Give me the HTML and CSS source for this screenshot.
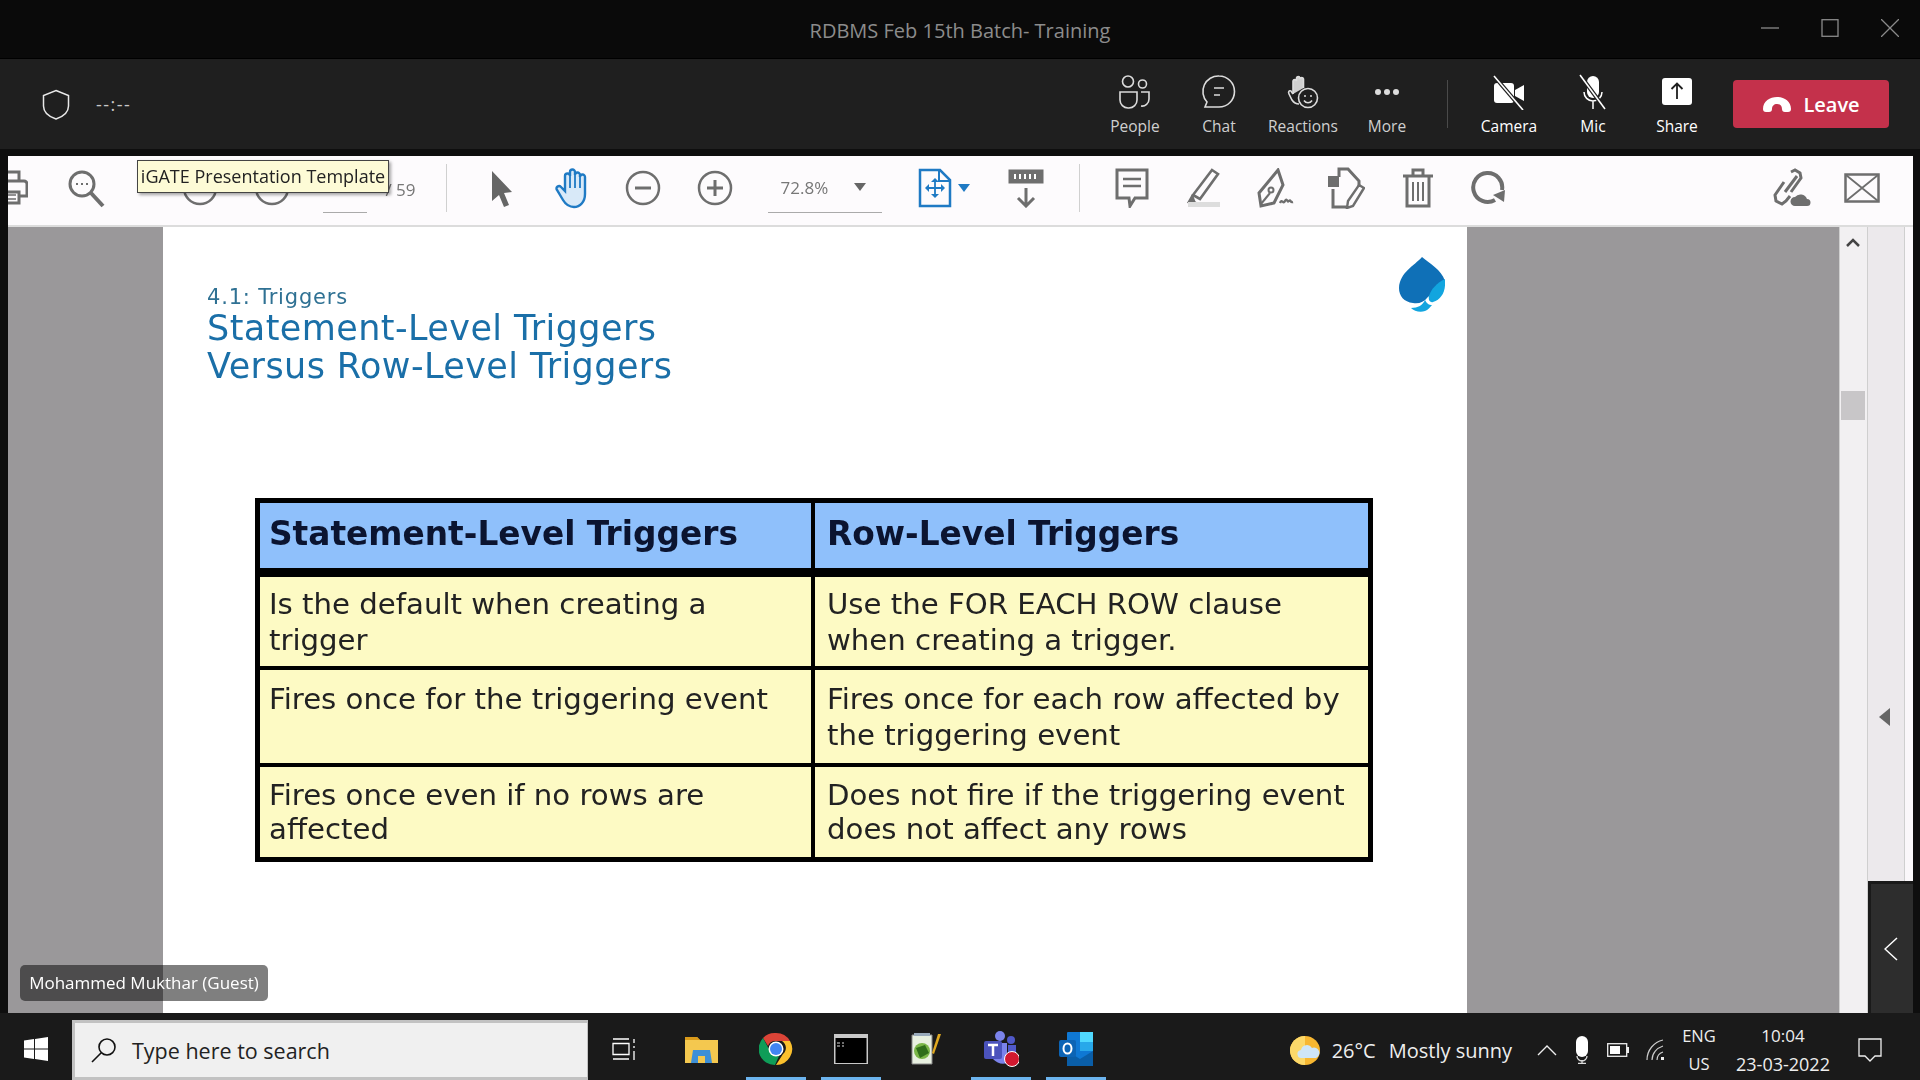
FILE: index.html
```html
<!DOCTYPE html>
<html>
<head>
	<meta charset="utf-8">
	<title>RDBMS Feb 15th Batch- Training</title>
	<link rel="stylesheet" href="styles.css">
</head>
<body>
	<div class="titlebar">
		<div class="title">RDBMS Feb 15th Batch- Training</div>
		<div class="winbtns">
			<svg width="18" height="18" viewBox="0 0 18 18"><path d="M0 9h18" stroke="#8a8a8a" stroke-width="1.3"/></svg>
			<svg width="18" height="18" viewBox="0 0 18 18"><rect x="1" y="0.7" width="16" height="16.6" fill="none" stroke="#8a8a8a" stroke-width="1.3"/></svg>
			<svg width="18" height="18" viewBox="0 0 18 18"><path d="M0 0l18 18M18 0L0 18" stroke="#8a8a8a" stroke-width="1.3"/></svg>
		</div>
	</div>

	<div class="meetbar">
		<svg class="shield" width="28" height="31" viewBox="0 0 28 31"><path d="M14 1.5l12.5 5V17c0 6-5 10.500-12.500 13C6.500 27.500 1.500 23 1.500 17V6.500z" fill="none" stroke="#e8e8e8" stroke-width="1.5"/></svg>
		<span class="timer">--:--</span>
		<div class="meetbtns">
			<div class="mbtn">
				<svg width="36" height="36" viewBox="0 0 36 36" fill="none" stroke="#dcdcdc" stroke-width="1.6"><circle cx="11" cy="7.500" r="5.500"/><circle cx="25.500" cy="10" r="4"/><path d="M3 18h17v8a8 8 0 0 1-8 8h-1a8 8 0 0 1-8-8zM24 18h8v7a7 7 0 0 1-8 7"/></svg>
				<span>People</span>
			</div>
			<div class="mbtn">
				<svg width="36" height="36" viewBox="0 0 36 36" fill="none" stroke="#dcdcdc" stroke-width="1.6"><path d="M18 2a15.500 15.500 0 0 1 0 31h-14l2-5A15.500 15.500 0 0 1 18 2z"/><path d="M13 14h10M13 21h6"/></svg>
				<span>Chat</span>
			</div>
			<div class="mbtn">
				<svg width="36" height="36" viewBox="0 0 36 36" fill="none" stroke="#dcdcdc" stroke-width="1.6"><path d="M8 20V7a1.800 1.800 0 0 1 3.500 0V4a1.800 1.800 0 0 1 3.500 0v1a1.800 1.800 0 0 1 3.500 0v9" fill="#cfcfcf"/><path d="M8 20l-2-3c-2-1-3 1-2 3l3 6c2 3 4 4 7 4"/><circle cx="23" cy="24" r="9.500" fill="#1f1f1f"/><circle cx="20" cy="22" r="1" fill="#dcdcdc" stroke="none"/><circle cx="26" cy="22" r="1" fill="#dcdcdc" stroke="none"/><path d="M19 26.500c2 3 6 3 8 0"/></svg>
				<span>Reactions</span>
			</div>
			<div class="mbtn">
				<svg width="36" height="36" viewBox="0 0 36 36" fill="#dcdcdc"><circle cx="9" cy="18" r="3"/><circle cx="18" cy="18" r="3"/><circle cx="27" cy="18" r="3"/></svg>
				<span>More</span>
			</div>
			<div class="mdivider"></div>
			<div class="mbtn on">
				<svg width="36" height="36" viewBox="0 0 36 36"><rect x="3" y="9" width="20" height="20" rx="3" fill="#fff"/><path d="M24 16l9-5v16l-9-5z" fill="#fff"/><path d="M3 2l29 34" stroke="#1f1f1f" stroke-width="4"/><path d="M3 2l29 34" stroke="#fff" stroke-width="1.600"/></svg>
				<span>Camera</span>
			</div>
			<div class="mbtn on">
				<svg width="36" height="36" viewBox="0 0 36 36" fill="none"><rect x="12" y="2" width="12" height="22" rx="6" fill="#fff"/><path d="M9 18a9 9 0 0 0 18 0M18 27v8" stroke="#fff" stroke-width="1.500"/><path d="M5 1l25 34" stroke="#1f1f1f" stroke-width="4"/><path d="M5 1l25 34" stroke="#fff" stroke-width="1.600"/></svg>
				<span>Mic</span>
			</div>
			<div class="mbtn on">
				<svg width="36" height="36" viewBox="0 0 36 36"><rect x="3" y="4" width="30" height="27" rx="3" fill="#fff"/><path d="M18 25V10M12.500 15L18 9.500l5.500 5.500" fill="none" stroke="#1f1f1f" stroke-width="1.800"/></svg>
				<span>Share</span>
			</div>
			<div class="leave">
				<svg width="30" height="16" viewBox="0 0 30 16"><path d="M1 13C1 5 8 1 15 1s14 4 14 12c0 2-1 3-3 3h-3c-2 0-3-1-3-3 0-3-2-5-5-5s-5 2-5 5c0 2-1 3-3 3H4c-2 0-3-1-3-3z" fill="#fff"/></svg>
				<span>Leave</span>
			</div>
		</div>
	</div>

	<div class="stage">
		<div class="toolbar">
			<div class="tool printer">
				<svg width="20" height="36" viewBox="0 0 20 36" fill="none" stroke="#6e6e6e" stroke-width="3"><path d="M-4 11V2h15v9"/><path d="M-4 11h20a3 3 0 0 1 3 3v12H11"/><path d="M-4 22h15v11H-4"/><path d="M0 25h8M0 29h8" stroke-width="1.500"/></svg>
			</div>
			<div class="tool mag">
				<svg width="40" height="40" viewBox="0 0 40 40" fill="none" stroke="#6e6e6e" stroke-width="3"><circle cx="16" cy="16" r="12"/><path d="M25 25l12 13" stroke-width="4"/><path d="M10 16h2M15 16h2M20 16h2" stroke-width="2"/></svg>
			</div>
			<div class="tool"><svg class="ico" viewBox="0 0 36 36" fill="none" stroke="#6e6e6e" stroke-width="2.500"><circle cx="18" cy="18" r="16"/></svg></div>
			<div class="tool"><svg class="ico" viewBox="0 0 36 36" fill="none" stroke="#6e6e6e" stroke-width="2.500"><circle cx="18" cy="18" r="16"/></svg></div>
			<div class="pagebox"><span class="pageno">/ 59</span></div>
			<div class="tdivider"></div>
			<div class="tool">
				<svg width="28" height="40" viewBox="0 0 28 40"><path d="M4 3l20 21-8 1 5 12-5 2-5-12-7 6z" fill="#666"/></svg>
			</div>
			<div class="tool hand">
				<svg width="40" height="42" viewBox="0 0 40 42" fill="#d8e9f8" stroke="#1f7ac4" stroke-width="2.400"><path d="M11 24V9a2.500 2.500 0 0 1 5 0V5a2.500 2.500 0 0 1 5 0v3a2.500 2.500 0 0 1 5 0v2a2.500 2.500 0 0 1 5 0v17c0 8-5 13-11 13-5 0-8-2-11-7l-6-10c-2-3 2-5 4-3z"/><path d="M16 8v13M21 7v14M26 9v12" fill="none" stroke-width="1.800"/></svg>
			</div>
			<div class="tool"><svg class="ico" viewBox="0 0 36 36" fill="none" stroke="#6e6e6e" stroke-width="2.500"><circle cx="18" cy="18" r="16"/><path d="M10 18h16" stroke-width="3"/></svg></div>
			<div class="tool"><svg class="ico" viewBox="0 0 36 36" fill="none" stroke="#6e6e6e" stroke-width="2.500"><circle cx="18" cy="18" r="16"/><path d="M10 18h16M18 10v16" stroke-width="3"/></svg></div>
			<div class="zoombox"><span>72.8%</span><i class="caret"></i></div>
			<div class="tool fit">
				<svg width="34" height="40" viewBox="0 0 34 40" fill="none" stroke="#1f7ac4" stroke-width="2.500"><path d="M2 2h20l10 10v26H2z"/><path d="M21 2v11h11" stroke-width="2"/><path d="M17 11v18M8 20h18" stroke-width="1.800"/><path d="M13 14l4-4 4 4M13 26l4 4 4-4M11 16l-4 4 4 4M23 16l4 4-4 4" fill="#1f7ac4" stroke="none"/></svg>
				<i class="caret blue"></i>
			</div>
			<div class="tool">
				<svg width="36" height="40" viewBox="0 0 36 40" fill="none" stroke="#6e6e6e"><rect x="1" y="2" width="34" height="13" fill="#6e6e6e"/><path d="M7 6v5M12 6v5M17 6v5M22 6v5M27 6v5" stroke="#fff" stroke-width="2"/><path d="M18 20v18M10 30l8 8 8-8" stroke-width="3"/></svg>
			</div>
			<div class="tdivider second"></div>
			<div class="tool">
				<svg width="34" height="40" viewBox="0 0 34 40" fill="none" stroke="#6e6e6e" stroke-width="3"><path d="M2 2h30v28H20l-5 8-1-8H2z"/><path d="M8 11h18M8 18h18" stroke-width="2.400"/></svg>
			</div>
			<div class="tool">
				<svg width="38" height="40" viewBox="0 0 38 40" fill="none" stroke="#6e6e6e" stroke-width="2.600"><path d="M28 2l6 4-18 25-7-4z"/><path d="M9 27l-4 7 7 1" fill="#6e6e6e"/><rect x="4" y="34" width="32" height="5" fill="#ddd" stroke="none"/></svg>
			</div>
			<div class="tool">
				<svg width="38" height="40" viewBox="0 0 38 40" fill="none" stroke="#6e6e6e" stroke-width="3"><path d="M22 2l5 15-9 18-13 3-2-13z"/><path d="M5 36l9-11" stroke-width="2"/><circle cx="15" cy="22" r="2.500" stroke-width="2"/><path d="M24 35c2-5 3 2 5-2s2 2 4 0 1 2 4 1" stroke-width="2.400"/></svg>
			</div>
			<div class="tool">
				<svg width="38" height="42" viewBox="0 0 38 42" fill="none" stroke="#6e6e6e" stroke-width="3"><path d="M12 10V2h9l11 12v6M6 22v18h14"/><rect x="1" y="9" width="11" height="11" fill="#6e6e6e" stroke="none"/><path d="M32 18l5 3-11 18-6 2 1-7z" stroke-width="2.400"/></svg>
			</div>
			<div class="tool">
				<svg width="32" height="40" viewBox="0 0 32 40" fill="none" stroke="#6e6e6e" stroke-width="3"><path d="M1 8h30M11 8V2h10v6M5 8v30h22V8"/><path d="M11 14v19M16 14v19M21 14v19" stroke-width="2"/></svg>
			</div>
			<div class="tool">
				<svg width="36" height="36" viewBox="0 0 36 36" fill="none" stroke="#6e6e6e" stroke-width="4"><path d="M24 30A14.500 14.500 0 1 1 31 20"/><path d="M22 25l11 7 1-12z" fill="#6e6e6e" stroke="none"/></svg>
			</div>
			<div class="toolright">
				<div class="tool">
					<svg width="40" height="40" viewBox="0 0 40 40" fill="none" stroke="#6e6e6e" stroke-width="3"><path d="M20 4l4-2 5 3 1 5-10 14M13 14L4 27l1 6 6 3 4-3 4-5"/><path d="M14 24l12-16"/><path d="M24 38a4.500 4.500 0 0 1 0-9 7 7 0 0 1 12 2 3.500 3.500 0 0 1 0 7z" fill="#6e6e6e" stroke="none"/></svg>
				</div>
				<div class="tool">
					<svg width="36" height="30" viewBox="0 0 36 30" fill="none" stroke="#6e6e6e" stroke-width="2.500"><rect x="1.500" y="1.500" width="33" height="27"/><path d="M2 2l32 26M34 2L2 28" stroke-width="1.800"/></svg>
				</div>
			</div>
		</div>

		<div class="viewer">
			<div class="canvas">
				<div class="slide">
					<div class="slidehead">
						<div class="heads">
							<div class="kicker">4.1: Triggers</div>
							<h1>Statement-Level Triggers<br>Versus Row-Level Triggers</h1>
						</div>
						<svg class="logo" width="46" height="56" viewBox="0 0 46 56"><path d="M23 0C15 9 1 15 0 31c0 8 5 14 14 15 6 1 11-1 14-5 2-3 8-4 18-17C42 12 31 7 23 0z" fill="#0f70b7"/><path d="M46 22c1 12-3 20-12 23-3 1-5-2-4-6 2-7 8-13 16-17z" fill="#12a5df"/><path d="M26 43c-2 5-7 8-14 8 3 3 9 5 14 3 3-1 5-4 7-6-3 0-5-1-7-5z" fill="#12a5df"/></svg>
					</div>
					<div class="ttable">
						<div class="row head">
							<div class="cell">Statement-Level Triggers</div>
							<div class="cell">Row-Level Triggers</div>
						</div>
						<div class="row r1">
							<div class="cell">Is the default when creating a<br>trigger</div>
							<div class="cell">Use the FOR EACH ROW clause<br>when creating a trigger.</div>
						</div>
						<div class="row r2">
							<div class="cell">Fires once for the triggering event</div>
							<div class="cell">Fires once for each row affected by<br>the triggering event</div>
						</div>
						<div class="row r3">
							<div class="cell">Fires once even if no rows are<br>affected</div>
							<div class="cell">Does not fire if the triggering event<br>does not affect any rows</div>
						</div>
					</div>
				</div>
			</div>
			<div class="vscroll">
				<svg class="upchev" width="14" height="9" viewBox="0 0 14 9"><path d="M1 8l6-6 6 6" fill="none" stroke="#444" stroke-width="2.500"/></svg>
				<div class="thumb"></div>
			</div>
			<div class="sidepane">
				<i class="lefttri"></i>
			</div>
			<div class="sideedge"></div>
			<div class="collapse">
				<svg width="14" height="24" viewBox="0 0 14 24"><path d="M13 1L1 12l12 11" fill="none" stroke="#fff" stroke-width="1.500"/></svg>
			</div>
		</div>

		<div class="tooltip">iGATE Presentation Template</div>
		<div class="nametag">Mohammed Mukthar (Guest)</div>
	</div>

	<div class="taskbar">
		<div class="start">
			<svg width="24" height="24" viewBox="0 0 24 24" fill="#fff"><path d="M0 3.500l10-1.400V11.500H0zM11 2l13-2v11.500H11zM0 12.500h10v9.500L0 20.500zM11 12.500h13V24l-13-2z"/></svg>
		</div>
		<div class="search">
			<svg width="26" height="26" viewBox="0 0 26 26" fill="none" stroke="#111" stroke-width="1.600"><circle cx="16" cy="10" r="8"/><path d="M10 16L1 25"/></svg>
			<span>Type here to search</span>
		</div>
		<div class="apps">
			<div class="app taskview">
				<svg width="24" height="24" viewBox="0 0 24 24" fill="none" stroke="#fff" stroke-width="1.300"><path d="M1 2h16M1 6.500h16v11H1zM1 22h16"/><path d="M22 2v4M22 9v2M22 14v9"/></svg>
			</div>
			<div class="app">
				<svg width="33" height="28" viewBox="0 0 33 28"><path d="M0 2h12l3 3h18v23H0z" fill="#f4c84f"/><path d="M0 2h12l3 3H0z" fill="#d99a1a"/><path d="M8 15h17l2 13H6z" fill="#3d8fd6"/><rect x="13" y="21" width="7" height="7" fill="#f4c84f"/></svg>
			</div>
			<div class="app run">
				<svg width="34" height="34" viewBox="0 0 34 34"><path d="M17 1a16 16 0 0 1 14 8H17a8 8 0 0 0-8 5L4 6a16 16 0 0 1 13-5z" fill="#db4437"/><path d="M31 9a16 16 0 0 1-14 24l7-11a8 8 0 0 0-1-13z" fill="#fbc02d"/><path d="M4 6l7 13a8 8 0 0 0 9 5l-4 9A16 16 0 0 1 4 6z" fill="#0f9d58"/><circle cx="17" cy="17" r="7.500" fill="#fff"/><circle cx="17" cy="17" r="6" fill="#4285f4"/></svg>
			</div>
			<div class="app run">
				<svg width="34" height="30" viewBox="0 0 34 30"><rect width="34" height="30" fill="#c9c9c9"/><rect x="1.500" y="4" width="31" height="25" fill="#000"/><path d="M3 9h3M3 12h3M8 9h2M8 12h2" stroke="#ddd" stroke-width="1"/></svg>
			</div>
			<div class="app">
				<svg width="32" height="34" viewBox="0 0 32 34"><path d="M2 3h20v29H2z" fill="#e8f0e0" stroke="#888"/><path d="M4 1h16v3H4z" fill="#9ab"/><circle cx="12" cy="19" r="8" fill="#7ab648"/><path d="M6 16l9-3 4 8-9 5z" fill="#2f6e1a"/><path d="M24 22L31 2l-3 0-6 19z" fill="#e0a820"/></svg>
			</div>
			<div class="app run">
				<svg width="36" height="36" viewBox="0 0 36 36"><circle cx="17" cy="5" r="5" fill="#7b83eb"/><circle cx="28" cy="9" r="4" fill="#5059c9"/><path d="M10 12h14v20c-5 2-10 0-14-4z" fill="#7b83eb"/><path d="M25 14h8v11c0 3-3 5-8 5z" fill="#5059c9"/><rect x="1" y="10" width="18" height="18" rx="2" fill="#4b53bc"/><path d="M5 14h10M10 14v11" stroke="#fff" stroke-width="2.500"/><circle cx="29" cy="28" r="7.500" fill="#d1182f" stroke="#fff" stroke-width="1"/></svg>
			</div>
			<div class="app run">
				<svg width="36" height="36" viewBox="0 0 36 36"><rect x="9" y="1" width="26" height="34" rx="1" fill="#0f78d4"/><rect x="22" y="1" width="13" height="10" fill="#50d9ff"/><rect x="22" y="11" width="13" height="9" fill="#28a8ea"/><path d="M9 20l13 8 13-8v15H9z" fill="#0a5ea8"/><rect x="1" y="9" width="17" height="17" rx="2" fill="#0c64b5"/><ellipse cx="9.500" cy="17.500" rx="4" ry="5" fill="none" stroke="#fff" stroke-width="2"/></svg>
			</div>
		</div>
		<div class="tray">
			<svg class="weather" width="30" height="29" viewBox="0 0 30 29"><ellipse cx="15" cy="14.500" rx="15" ry="14.500" fill="#f7b731"/><path d="M15 0a15 14.500 0 0 0 0 29z" fill="#fcd96a"/><path d="M12 22a4 4 0 0 1-1-8 6 6 0 0 1 11-2 5 5 0 0 1 4 10z" fill="#cfe6f7"/></svg>
			<span class="temp">26°C</span>
			<span class="sky">Mostly sunny</span>
			<svg class="tchev" width="20" height="12" viewBox="0 0 20 12"><path d="M1 11l9-9 9 9" fill="none" stroke="#eee" stroke-width="1.400"/></svg>
			<svg class="tmic" width="14" height="28" viewBox="0 0 14 28"><rect x="1" y="0" width="12" height="21" rx="6" fill="#fff"/><path d="M2 20a5 5 0 0 0 10 0M7 24v3M3 27.500h8" fill="none" stroke="#ddd" stroke-width="1.300"/></svg>
			<svg class="tbatt" width="22" height="14" viewBox="0 0 22 14"><rect x="0.700" y="0.700" width="19" height="12.600" fill="none" stroke="#eee" stroke-width="1.300"/><rect x="3" y="3" width="10" height="8" fill="#fff"/><rect x="20" y="4" width="2" height="6" fill="#eee"/></svg>
			<svg class="twifi" width="18" height="22" viewBox="0 0 18 22" fill="none" stroke="#ccc" stroke-width="1.200"><path d="M1 21C1 11 8 3 17 1M6 21c0-7 5-12 11-14M11 21c0-4 3-7 6-8"/><rect x="15" y="18" width="3" height="3" fill="#eee" stroke="none"/></svg>
			<div class="stack lang"><span>ENG</span><span>US</span></div>
			<div class="stack clock"><span>10:04</span><span class="date">23-03-2022</span></div>
			<svg class="notif" width="24" height="24" viewBox="0 0 24 24"><path d="M1 1h22v17h-6l-5 5-5-5H1z" fill="none" stroke="#eee" stroke-width="1.300"/></svg>
		</div>
	</div>
</body>
</html>
```

FILE: styles.css
```css
*{margin:0;padding:0;box-sizing:border-box;}
html,body{width:1920px;height:1080px;overflow:hidden;}
body{background:#1a1a1a;font-family:"Open Sans","Noto Sans",sans-serif;color:#fff;position:relative;}
svg{display:block;flex:none;}
i{display:block;}

/* top window bar */
.titlebar{
	height:59px;
	background:#0a0a0a;
	border-bottom:1px solid #000;
	display:flex;
	align-items:center;
	justify-content:center;
}
.title{
	font-size:20px;
	color:#8c8c8c;
	padding-top:2px;
}
.winbtns{
	position:absolute;
	top:19px;
	right:21px;
	display:flex;
	gap:42px;
}

.meetbar{
	height:90px;
	background:#1f1f1f;
	display:flex;
	align-items:center;
	padding:0 31px 0 42px;
}
.shield{margin-right:26px;}
.timer{font-size:18px;color:#c8c8c8;letter-spacing:1.500px;}
.meetbtns{margin-left:auto;display:flex;align-items:center;}
.mbtn{
	width:84px;
	height:90px;
	padding-top:15px;
	display:flex;
	flex-direction:column;
	align-items:center;
	color:#cfcfcf;
	font-size:15.5px;
}
.mbtn span{margin-top:6px;line-height:20px;}
.mbtn.on{color:#fff;}
.mdivider{width:1px;height:48px;background:#4a4a4a;margin:0 19px 0 18px;}
.leave{
	width:156px;
	height:48px;
	margin-left:14px;
	background:#c4314b;
	border-radius:4px;
	display:flex;
	align-items:center;
	justify-content:center;
	gap:11px;
	font-size:20px;
	font-weight:600;
}

/* shared screen */
.stage{
	height:864px;
	background:#0e0e0e;
	padding:7px 7px 0 8px;
	position:relative;
	filter:blur(.4px);
}
.toolbar{
	height:71px;
	background:#fdfbfd;
	border-bottom:2px solid #dcdcdc;
	display:flex;
	align-items:center;
	color:#6e6e6e;
	padding-bottom:6px;
}
.tool{
	width:71.5px;
	display:flex;
	justify-content:center;
	align-items:center;
	flex:none;
}
.ico{width:36px;height:36px;}
.printer{width:20px;justify-content:flex-start;}
.mag{margin:0 43px 0 22px;}
.pagebox{
	width:93px;
	height:50px;
	margin:0 30px 0 15px;
	position:relative;
	font-size:17px;
	color:#777;
	display:flex;
	justify-content:flex-end;
	align-items:center;
}
.pagebox:after{
	content:"";
	position:absolute;
	left:0;
	bottom:0;
	width:44px;
	height:1px;
	background:#aaa;
}
.pageno{padding-top:4px;}
.tdivider{width:1px;height:48px;background:#d0d0d0;margin-right:20px;}
.hand{margin-right:-2px;}
.zoombox{
	width:114px;
	height:50px;
	margin:0 18px 0 17px;
	border-bottom:1px solid #aaa;
	font-size:17px;
	color:#777;
	display:flex;
	align-items:center;
	padding-left:13px;
	gap:26px;
}
.caret{
	width:0;
	height:0;
	border-left:6px solid transparent;
	border-right:6px solid transparent;
	border-top:8px solid #666;
}
.caret.blue{border-top-color:#1f7ac4;margin-left:6px;}
.fit{width:85px;margin-right:6px;justify-content:flex-start;padding-left:18px;}
.tdivider.second{margin-left:17px;margin-right:16px;}
.toolright{margin-left:auto;margin-right:15px;display:flex;}

.viewer{height:786px;display:flex;position:relative;}
.canvas{width:1831px;background:#9a989a;padding-left:155px;flex:none;}
.slide{width:1304px;height:786px;background:#fff;}
.slidehead{
	height:271px;
	padding:0 22px 0 44px;
	display:flex;
	justify-content:space-between;
	font-family:"DejaVu Sans",sans-serif;
}
.heads{padding-top:58px;}
.kicker{font-size:21px;line-height:24px;letter-spacing:.8px;color:#2f7193;}
h1{font-size:35px;font-weight:normal;line-height:38px;letter-spacing:.42px;color:#1a6fa8;}
.logo{margin-top:30px;}

.ttable{
	width:1118px;
	margin-left:92px;
	background:#000;
	border:5px solid #000;
	font-family:"DejaVu Sans",sans-serif;
	font-size:29.2px;
	color:#222;
	display:flex;
	flex-direction:column;
	gap:4px;
}
.row{display:grid;grid-template-columns:551px 553px;gap:4px;}
.cell{background:#fdfac4;padding:0 12px;line-height:36px;}
.cell:first-child{padding-left:9px;}
.head{margin-bottom:5px;}
.head .cell{
	background:#8fc0fb;
	height:65px;
	line-height:62px;
	font-weight:bold;
	font-size:32.8px;
	color:#0b1430;
}
.r1 .cell{height:89px;padding-top:9px;}
.r2 .cell{height:93px;padding-top:11px;}
.r3 .cell{height:90px;padding-top:11px;line-height:34px;}

.vscroll{
	width:29px;
	background:#f2f0f2;
	border-left:1px solid #cfcfcf;
	border-right:1px solid #cfcfcf;
	flex:none;
	display:flex;
	flex-direction:column;
	align-items:center;
	padding:11px 2px 0 0;
}
.thumb{width:24px;height:29px;background:#c8c6c8;margin-top:144px;}
.sidepane{
	width:36px;
	background:#ece9ec;
	flex:none;
	padding:481px 0 0 11px;
}
.lefttri{
	width:0;
	height:0;
	border-top:9px solid transparent;
	border-bottom:9px solid transparent;
	border-right:11px solid #666;
}
.sideedge{flex:1;background:#faf7fa;border-left:1px solid #cfcfcf;}

.collapse{
	position:absolute;
	right:0;
	bottom:0;
	width:45px;
	height:132px;
	background:#2d2d2d;
	border-left:3px solid #1a1a1a;
	border-top:3px solid #1a1a1a;
	display:flex;
	align-items:center;
	padding-left:13px;
}
.tooltip{
	position:absolute;
	left:137px;
	top:11px;
	width:252px;
	height:33px;
	background:#fdfbd6;
	border:1px solid #444;
	box-shadow:2px 2px 3px rgba(0,0,0,.35);
	font-size:18px;
	line-height:31px;
	color:#222;
	text-align:center;
	white-space:nowrap;
}
.nametag{
	position:absolute;
	left:20px;
	top:816px;
	width:248px;
	height:36px;
	border-radius:5px;
	background:rgba(0,0,0,.5);
	font-size:17px;
	line-height:35px;
	text-align:center;
	white-space:nowrap;
}

/* windows taskbar */
.taskbar{
	height:67px;
	background:#1a1a1a;
	display:flex;
	align-items:stretch;
}
.start{width:72px;display:flex;align-items:center;justify-content:center;padding:4px 0 0 0;}
.search{
	width:516px;
	margin-top:7px;
	background:#f0f0f0;
	border:3px solid #c2c2c2;
	border-right-width:1px;
	color:#222;
	font-size:21.5px;
	display:flex;
	align-items:center;
	padding-left:16px;
	gap:15px;
}
.apps{display:flex;gap:15px;margin-left:8px;}
.app{
	width:60px;
	display:flex;
	align-items:center;
	justify-content:center;
	padding-top:8px;
	border-bottom:3px solid transparent;
}
.app.taskview{padding-right:4px;}
.app.run{border-bottom-color:#6cb4ee;}
.tray{margin-left:auto;display:flex;align-items:center;padding:7px 38px 0 0;font-size:20px;color:#eee;}
.temp{margin-left:12px;}
.sky{margin-left:13px;font-size:20px;}
.tchev{margin-left:25px;}
.tmic{margin-left:18px;}
.tbatt{margin-left:18px;}
.twifi{margin-left:17px;}
.stack{
	display:flex;
	flex-direction:column;
	align-items:center;
	gap:6px;
	font-size:16.500px;
	line-height:22px;
}
.lang{width:44px;margin-left:13px;}
.clock{width:100px;margin-left:12px;font-size:17px;}
.date{font-size:18px;}
.notif{margin-left:25px;}
```
